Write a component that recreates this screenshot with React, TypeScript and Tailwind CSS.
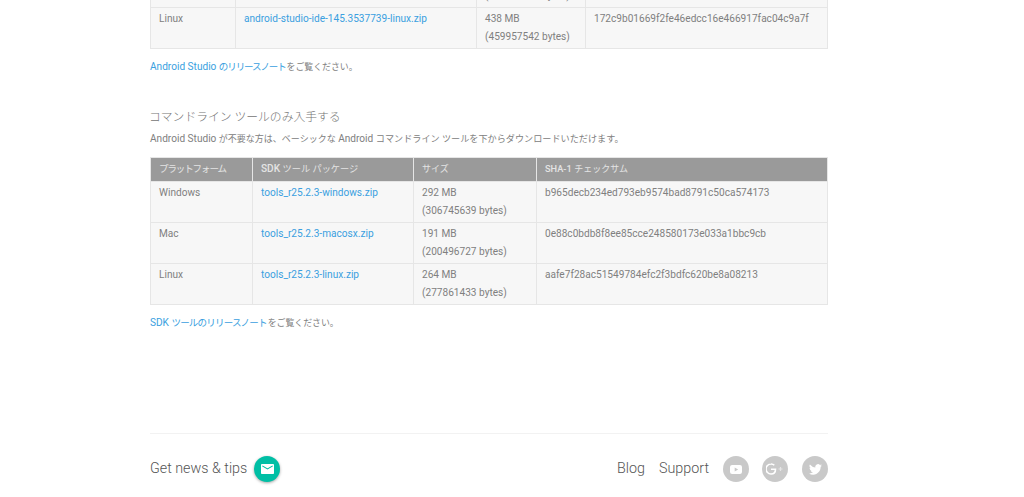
import React from "react";

const font = { fontFamily: '"Roboto", "Noto Sans CJK JP", sans-serif' };

type Row = [string, string, string, string, string];

function J({ children }: { children: React.ReactNode }) {
  return <span className="text-[9px]">{children}</span>;
}

function DataRow({ r }: { r: Row }) {
  return (
    <tr className="bg-[#f7f7f7] h-[41px]">
      <td className="border border-[#e6e6e6] px-2 pt-[2px] pb-0 align-top leading-[18px]">{r[0]}</td>
      <td className="border border-[#e6e6e6] px-2 pt-[2px] pb-0 align-top leading-[18px]">
        <a className="text-[#3a9fe0]">{r[1]}</a>
      </td>
      <td className="border border-[#e6e6e6] px-2 pt-[2px] pb-0 align-top leading-[18px] whitespace-nowrap">
        {r[2]}
        <br />
        {r[3]}
      </td>
      <td className="border border-[#e6e6e6] px-2 pt-[2px] pb-0 align-top leading-[18px] whitespace-nowrap">{r[4]}</td>
    </tr>
  );
}

const top: Row[] = [
  ["Mac", "android-studio-ide-145.3537739-mac.dmg", "471 MB", "(494000000 bytes)", "3f1a2b01669f2fe46edcc16e466917fac04c9a7f"],
  ["Linux", "android-studio-ide-145.3537739-linux.zip", "438 MB", "(459957542 bytes)", "172c9b01669f2fe46edcc16e466917fac04c9a7f"],
];

const tools: Row[] = [
  ["Windows", "tools_r25.2.3-windows.zip", "292 MB", "(306745639 bytes)", "b965decb234ed793eb9574bad8791c50ca574173"],
  ["Mac", "tools_r25.2.3-macosx.zip", "191 MB", "(200496727 bytes)", "0e88c0bdb8f8ee85cce248580173e033a1bbc9cb"],
  ["Linux", "tools_r25.2.3-linux.zip", "264 MB", "(277861433 bytes)", "aafe7f28ac51549784efc2f3bdfc620be8a08213"],
];

function Circle({ children, className }: { children: React.ReactNode; className: string }) {
  return <span className={`flex w-[26px] h-[26px] rounded-full items-center justify-center ${className}`}>{children}</span>;
}

export default function App() {
  return (
    <div style={font} className="h-[497px] w-[1024px] overflow-hidden bg-white text-[10.1px] text-[#808080]">
      <div className="ml-[150px] w-[678px] -mt-[34px]">
        <table className="w-[677px] table-fixed border-collapse">
          <colgroup>
            <col className="w-[85px]" />
            <col className="w-[241px]" />
            <col className="w-[109px]" />
            <col className="w-[242px]" />
          </colgroup>
          <tbody>
            {top.map((r) => (
              <DataRow key={r[1]} r={r} />
            ))}
          </tbody>
        </table>

        <p className="mt-[9px] leading-[18px]">
          <a className="text-[#3a9fe0]">
            Android Studio <span className="text-[9.5px] tracking-[-1.1px]">のリリースノート</span>
          </a>
          <span className="ml-px text-[8.9px]">をご覧ください。</span>
        </p>

        <h3 className="mt-[31px] -ml-px text-[11.8px] leading-[20px] font-light text-[#757575]">コマンドライン ツールのみ入手する</h3>
        <p className="mt-[3px] leading-[18px]">
          Android Studio <J>が不要な方は、ベーシックな</J> Android <span className="text-[9.15px]">コマンドライン ツールを下からダウンロードいただけます。</span>
        </p>

        <table className="mt-[9px] w-[677px] table-fixed border-collapse">
          <colgroup>
            <col className="w-[102px]" />
            <col className="w-[161px]" />
            <col className="w-[123px]" />
            <col className="w-[291px]" />
          </colgroup>
          <thead>
            <tr className="bg-[#9a9a9a] h-[24px] text-[#e4e4e4]">
              <th className="border border-[#e6e6e6] px-2 pt-0 pb-[1px] text-left font-normal">
                <span className="text-[9.5px] tracking-[-1.1px]">プラットフォーム</span>
              </th>
              <th className="border border-[#e6e6e6] px-2 pt-0 pb-[1px] text-left font-normal">
                <b className="font-medium">SDK</b> <span className="text-[9.2px]">ツール パッケージ</span>
              </th>
              <th className="border border-[#e6e6e6] px-2 pt-0 pb-[1px] text-left font-normal">
                <J>サイズ</J>
              </th>
              <th className="border border-[#e6e6e6] px-2 pt-0 pb-[1px] text-left font-normal">
                <b className="font-medium text-[9.2px]">SHA-1</b> <J>チェックサム</J>
              </th>
            </tr>
          </thead>
          <tbody>
            {tools.map((r) => (
              <DataRow key={r[1]} r={r} />
            ))}
          </tbody>
        </table>

        <p className="mt-[9px] leading-[18px]">
          <a className="text-[#3a9fe0]">
            SDK <span className="text-[9.5px] tracking-[-0.8px]">ツールのリリースノート</span>
          </a>
          <span className="ml-px text-[8.9px]">をご覧ください。</span>
        </p>

        <div className="mt-[101px] border-t border-[#f2f2f2] pt-[22px] flex items-center justify-between">
          <div className="flex items-center gap-[7px]">
            <span className="text-[14.3px] font-light text-[#555555]">Get news &amp; tips</span>
            <Circle className="bg-[#00bfa5] shadow-[0_1px_3px_rgba(0,0,0,0.35)]">
              <svg width="13" height="10" viewBox="0 0 13 11" preserveAspectRatio="none" fill="#fff">
                <path d="M1.2 0h10.6C12.5 0 13 .5 13 1.2v8.6c0 .7-.5 1.2-1.2 1.2H1.2C.5 11 0 10.500 0 9.800V1.200C0 .5.500 0 1.200 0z" />
                <path d="M1.300 2l5.200 3.300L11.700 2" fill="none" stroke="#00bfa5" strokeWidth="1.100" />
              </svg>
            </Circle>
          </div>
          <div className="flex items-center text-[14.3px] font-light text-[#555555]">
            <span>Blog</span>
            <span className="ml-[14px]">Support</span>
            <Circle className="ml-[14px] bg-[#c9c9c9]">
              <svg width="12" height="9" viewBox="0 0 14 11" preserveAspectRatio="none">
                <rect width="14" height="11" rx="2.500" fill="#fff" />
                <path d="M5.500 3l4 2.500-4 2.500z" fill="#c9c9c9" />
              </svg>
            </Circle>
            <Circle className="ml-[13px] bg-[#c9c9c9]">
              <svg width="18" height="12" viewBox="0 0 18 12" fill="none">
                <path d="M9.300 2.300A4.300 4.300 0 0 0 6 1a5 5 0 1 0 0 10c2.800 0 4.500-2 4.500-4.700H6" stroke="#fff" strokeWidth="1.600" transform="translate(-1 0)" />
                <path d="M14.500 4v4M12.500 6h4" stroke="#e6e6e6" strokeWidth="1.200" />
              </svg>
            </Circle>
            <Circle className="ml-[14px] bg-[#c9c9c9]">
              <svg width="13" height="11" viewBox="0 0 24 20" fill="#fff">
                <path d="M24 2.400a9.800 9.800 0 0 1-2.800.8A4.900 4.900 0 0 0 23.300.5a9.800 9.800 0 0 1-3.100 1.200 4.900 4.900 0 0 0-8.400 4.500A14 14 0 0 1 1.700.9a4.900 4.900 0 0 0 1.500 6.600 4.900 4.900 0 0 1-2.200-.6v.1a4.900 4.900 0 0 0 3.900 4.800 4.900 4.900 0 0 1-2.200.1 4.900 4.900 0 0 0 4.600 3.400A9.900 9.900 0 0 1 0 17.300 14 14 0 0 0 7.500 19.500c9.100 0 14-7.500 14-14v-.6A10 10 0 0 0 24 2.400z" />
              </svg>
            </Circle>
          </div>
        </div>
      </div>
    </div>
  );
}
